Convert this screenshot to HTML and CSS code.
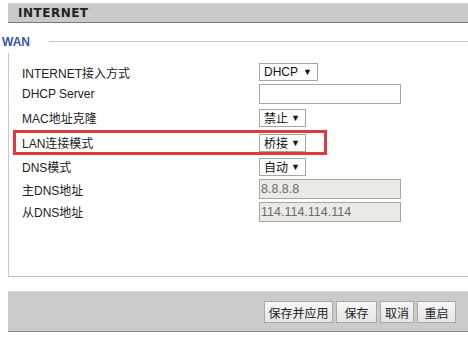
FILE: index.html
```html
<!DOCTYPE html>
<html>
<head>
<meta charset="utf-8">
<link rel="stylesheet" href="styles.css">
</head>
<body>
<div class="page">
  <div class="header">INTERNET</div>
  <div class="legend-row">
    <span class="legend">WAN</span>
    <span class="legend-line"></span>
  </div>
  <div class="section">
    <div class="row h22">
      <span class="label">INTERNET接入方式</span>
      <span class="sel w59"><span>DHCP</span><span class="arrow">▼</span></span>
    </div>
    <div class="row h22">
      <span class="label">DHCP Server</span>
      <span class="input"></span>
    </div>
    <div class="row h25">
      <span class="label">MAC地址克隆</span>
      <span class="sel w47"><span>禁止</span><span class="arrow">▼</span></span>
    </div>
    <div class="row h25 hl">
      <span class="label">LAN连接模式</span>
      <span class="sel w47"><span>桥接</span><span class="arrow">▼</span></span>
    </div>
    <div class="row h23">
      <span class="label">DNS模式</span>
      <span class="sel w47"><span>自动</span><span class="arrow">▼</span></span>
    </div>
    <div class="row h22">
      <span class="label">主DNS地址</span>
      <span class="input disabled">8.8.8.8</span>
    </div>
    <div class="row h23">
      <span class="label">从DNS地址</span>
      <span class="input disabled">114.114.114.114</span>
    </div>
  </div>
  <div class="footer">
    <button class="btn b1">保存并应用</button>
    <button class="btn b2">保存</button>
    <button class="btn b3">取消</button>
    <button class="btn b4">重启</button>
  </div>
</div>
</body>
</html>
```

FILE: styles.css
```css
html, body {
  margin: 0;
  padding: 0;
  background: #ffffff;
}
body {
  font-family: "Liberation Sans", "Noto Sans CJK SC", sans-serif;
  font-size: 12px;
  color: #222;
}
.page {
  padding-top: 3px;
  width: 468px;
}
.header {
  margin-left: 8px;
  height: 20px;
  line-height: 18px;
  background: #cacaca;
  border-top: 1px solid #d8d8d8;
  border-bottom: 1px solid #7a7a7a;
  padding-left: 10px;
  font-family: "DejaVu Sans", sans-serif;
  font-weight: bold;
  font-size: 12px;
  letter-spacing: 0.5px;
  color: #222;
  box-sizing: border-box;
}
.legend-row {
  display: flex;
  align-items: center;
  height: 22px;
  margin-top: 8px;
}
.legend {
  padding-left: 2px;
  font-weight: bold;
  font-size: 12px;
  color: #3a56a5;
}
.legend-line {
  flex: 1;
  margin-left: 19px;
  border-top: 1px solid #c8c8c8;
  margin-top: -2px;
}
.section {
  margin-left: 8px;
  border-left: 1px solid #c8c8c8;
  border-bottom: 1px solid #c0c0c0;
  padding-top: 8px;
  height: 224px;
  box-sizing: border-box;
}
.row {
  display: flex;
  align-items: center;
  width: 314px;
  margin-left: 4px;
  border: 3px solid transparent;
  padding-left: 6px;
  box-sizing: border-box;
}
.h22 { height: 22px; }
.h23 { height: 23px; }
.h25 { height: 25px; }
.row.hl {
  border-color: #e0393e;
}
.label {
  width: 237px;
  flex: none;
  color: #222;
}
.sel {
  flex: none;
  display: flex;
  align-items: center;
  justify-content: space-between;
  height: 18px;
  box-sizing: border-box;
  border: 1px solid #a6a6a6;
  padding: 0 5px 0 4px;
  background: #fff;
  font-size: 12px;
  color: #111;
}
.w59 { width: 59px; }
.w47 { width: 47px; }
.arrow {
  font-size: 9px;
  color: #111;
}
.input {
  flex: none;
  display: block;
  width: 142px;
  height: 20px;
  line-height: 18px;
  box-sizing: border-box;
  border: 1px solid #a6a6a6;
  background: #fff;
  padding-left: 1px;
  font-size: 12.5px;
}
.input.disabled {
  background: #ebeae4;
  color: #6a6a6a;
}
.footer {
  margin-left: 8px;
  margin-top: 14px;
  height: 41px;
  box-sizing: border-box;
  background: #cbcbcb;
  border-top: 1px solid #dadada;
  border-bottom: 1px solid #8a8a8a;
  display: flex;
  align-items: center;
  justify-content: flex-end;
  gap: 3px;
  padding-right: 12px;
  padding-top: 1px;
}
.btn {
  height: 22px;
  margin: 0;
  padding: 0;
  border: 1px solid #a8a8a8;
  background: linear-gradient(#f6f6f6, #e6e6e6);
  font-family: "Liberation Sans", "Noto Sans CJK SC", sans-serif;
  font-size: 12px;
  color: #222;
  box-sizing: border-box;
}
.b1 { width: 69px; }
.b2 { width: 41px; }
.b3 { width: 34px; }
.b4 { width: 39px; }
```
